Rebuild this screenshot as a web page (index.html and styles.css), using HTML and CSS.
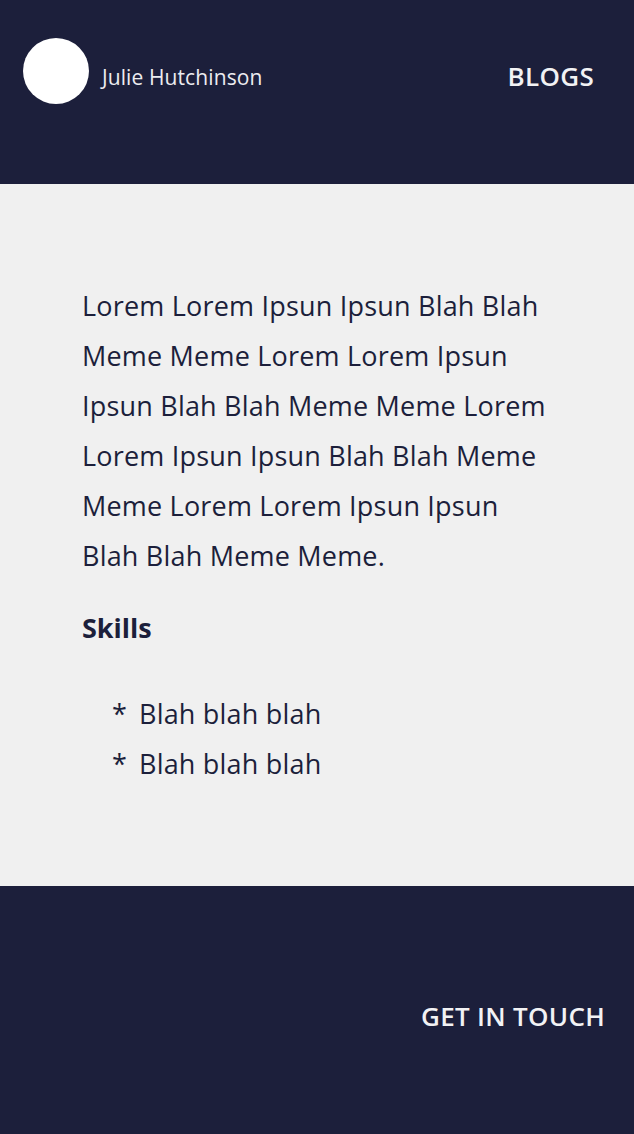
FILE: index.html
```html
<!DOCTYPE html>
<html>
<head>
<meta charset="utf-8">
<link rel="stylesheet" href="styles.css">
</head>
<body>
<header class="header">
  <div class="brand">
    <div class="avatar"></div>
    <span class="name">Julie Hutchinson</span>
  </div>
  <a class="nav-link" href="#">BLOGS</a>
</header>
<main class="main">
  <p class="intro">Lorem Lorem Ipsun Ipsun Blah Blah Meme Meme Lorem Lorem Ipsun Ipsun Blah Blah Meme Meme Lorem Lorem Ipsun Ipsun Blah Blah Meme Meme Lorem Lorem Ipsun Ipsun Blah Blah Meme Meme.</p>
  <h2 class="skills-title">Skills</h2>
  <ul class="skills">
    <li><span class="star">*</span>Blah blah blah</li>
    <li><span class="star">*</span>Blah blah blah</li>
  </ul>
</main>
<footer class="footer">
  <a class="contact" href="#">GET IN TOUCH</a>
</footer>
</body>
</html>
```
FILE: styles.css
```css
* { box-sizing: border-box; }
html, body { margin: 0; padding: 0; }
body {
  font-family: "Open Sans", Lato, sans-serif;
  background: #f0f0f0;
  color: #1c1f3b;
}
.header {
  height: 184px;
  background: #1c1f3b;
  display: flex;
  justify-content: space-between;
  align-items: flex-start;
  padding: 38px 40px 0 23px;
}
.brand {
  display: flex;
  align-items: center;
  gap: 13px;
}
.avatar {
  width: 66px;
  height: 66px;
  border-radius: 50%;
  background: #ffffff;
}
.name {
  color: #ececf0;
  font-size: 21px;
  letter-spacing: 0.1px;
  padding-top: 12px;
}
.nav-link {
  color: #f2f2f4;
  text-decoration: none;
  font-weight: 600;
  font-size: 26px;
  letter-spacing: 0.3px;
  margin-top: 20px;
}
.main {
  height: 702px;
  padding: 97px 82px 0 82px;
}
.intro {
  margin: 0;
  font-size: 27px;
  letter-spacing: 0.2px;
  line-height: 50px;
}
.skills-title {
  margin: 22px 0 0;
  font-size: 27px;
  font-weight: 700;
  line-height: 50px;
}
.skills {
  list-style: none;
  margin: 36px 0 0;
  padding: 0 0 0 30px;
  font-size: 27px;
  letter-spacing: 0.2px;
  line-height: 50px;
}
.star {
  display: inline-block;
  width: 27px;
}
.footer {
  height: 248px;
  background: #1c1f3b;
  display: flex;
  justify-content: flex-end;
  padding: 112px 29px 0 0;
}
.contact {
  color: #f2f2f4;
  text-decoration: none;
  font-weight: 600;
  font-size: 26px;
  letter-spacing: 0.3px;
  height: 36px;
}
```
